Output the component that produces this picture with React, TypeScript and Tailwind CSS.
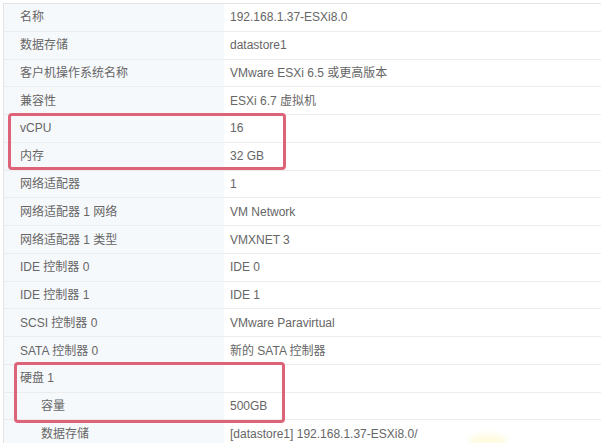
import React from "react";

type Row = { label: string; value: string; indent?: boolean };

const rows: Row[] = [
  { label: "名称", value: "192.168.1.37-ESXi8.0" },
  { label: "数据存储", value: "datastore1" },
  { label: "客户机操作系统名称", value: "VMware ESXi 6.5 或更高版本" },
  { label: "兼容性", value: "ESXi 6.7 虚拟机" },
  { label: "vCPU", value: "16" },
  { label: "内存", value: "32 GB" },
  { label: "网络适配器", value: "1" },
  { label: "网络适配器 1 网络", value: "VM Network" },
  { label: "网络适配器 1 类型", value: "VMXNET 3" },
  { label: "IDE 控制器 0", value: "IDE 0" },
  { label: "IDE 控制器 1", value: "IDE 1" },
  { label: "SCSI 控制器 0", value: "VMware Paravirtual" },
  { label: "SATA 控制器 0", value: "新的 SATA 控制器" },
  { label: "硬盘 1", value: "" },
  { label: "容量", value: "500GB", indent: true },
  { label: "数据存储", value: "[datastore1] 192.168.1.37-ESXi8.0/", indent: true },
];

export default function App() {
  return (
    <div
      className="relative w-[601px] h-[443px] overflow-hidden bg-white text-[12px] text-[#666666]"
      style={{ fontFamily: '"Liberation Sans", "Noto Sans CJK SC", sans-serif' }}
    >
      <div className="mt-[3px] ml-[3px] w-[640px] border-l border-t border-[#e3e3e3]">
        {rows.map((r, i) => (
          <div key={i} className="flex h-[27.77px] border-b border-[#ececec]">
            <div
              className={`w-[220px] shrink-0 bg-[#f6f9fc] flex items-center ${r.indent ? "pl-[37px]" : "pl-[16px]"}`}
            >
              {r.label}
            </div>
            <div className="flex-1 flex items-center pl-[6px]">{r.value}</div>
          </div>
        ))}
      </div>

      <div className="absolute left-[8px] top-[113px] w-[278px] h-[57px] border-[3px] border-[#dd6478] rounded-[4px]" />
      <div className="absolute left-[14px] top-[362px] w-[271px] h-[61px] border-[3px] border-[#dd6478] rounded-[4px]" />

      <div className="absolute left-[470px] top-[435px] w-[36px] h-[12px] rounded-full bg-[#fff6c0] opacity-50 blur-[3px]" />
    </div>
  );
}
